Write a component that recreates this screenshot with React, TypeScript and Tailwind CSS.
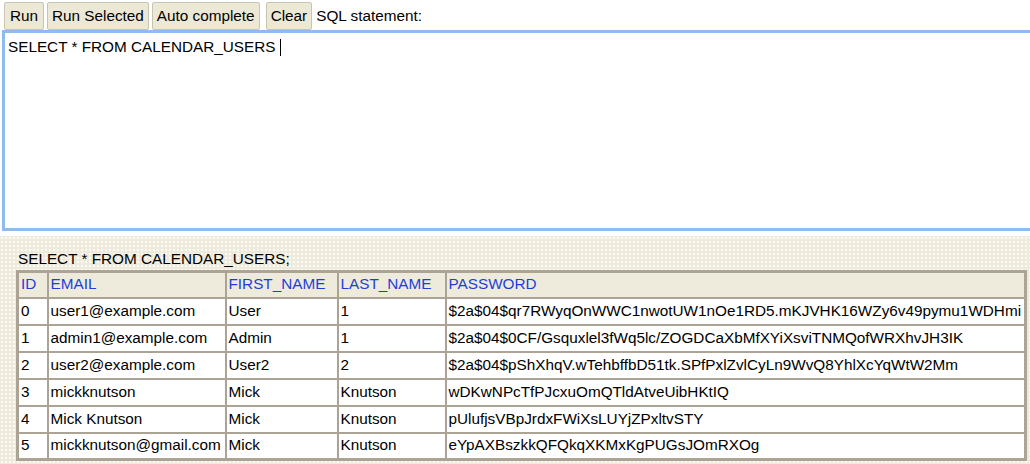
const rows = [
  ["0", "user1@example.com", "User", "1", "$2a$04$qr7RWyqOnWWC1nwotUW1nOe1RD5.mKJVHK16WZy6v49pymu1WDHmi"],
  ["1", "admin1@example.com", "Admin", "1", "$2a$04$0CF/Gsquxlel3fWq5lc/ZOGDCaXbMfXYiXsviTNMQofWRXhvJH3IK"],
  ["2", "user2@example.com", "User2", "2", "$2a$04$pShXhqV.wTehbffbD51tk.SPfPxlZvlCyLn9WvQ8YhlXcYqWtW2Mm"],
  ["3", "mickknutson", "Mick", "Knutson", "wDKwNPcTfPJcxuOmQTldAtveUibHKtIQ"],
  ["4", "Mick Knutson", "Mick", "Knutson", "pUlufjsVBpJrdxFWiXsLUYjZPxltvSTY"],
  ["5", "mickknutson@gmail.com", "Mick", "Knutson", "eYpAXBszkkQFQkqXKMxKgPUGsJOmRXOg"],
];

const headers = ["ID", "EMAIL", "FIRST_NAME", "LAST_NAME", "PASSWORD"];
const widths = ["w-[30px]", "w-[178px]", "w-[112px]", "w-[108px]", ""];

function ToolButton({ label, className = "" }: { label: string; className?: string }) {
  return (
    <button
      className={`h-[28px] rounded-[2px] border border-[#c9c4b2] bg-[#ece8d6] px-[4px] leading-none text-black ${className}`}
    >
      {label}
    </button>
  );
}

export default function App() {
  return (
    <div className="h-[464px] w-[1030px] overflow-hidden bg-white font-['Liberation_Sans',Arial,sans-serif] text-[15.3px] text-black">
      {/* Toolbar */}
      <div className="flex h-[30px] items-center gap-[3px] pl-[4px] pt-[2px]">
        <ToolButton label="Run" className="w-[40px]" />
        <ToolButton label="Run Selected" />
        <ToolButton label="Auto complete" />
        <ToolButton label="Clear" className="ml-[3px]" />
        <span className="ml-px">SQL statement:</span>
      </div>

      {/* Editor */}
      <div className="-mr-[6px] ml-[2px] h-[201px] border-[3px] border-[#8fbcf0] bg-white px-[3px] pt-[3px]">
        <div className="flex items-center">
          <span>SELECT * FROM CALENDAR_USERS</span>
          <span className="ml-[5px] inline-block h-[17px] w-px bg-black" />
        </div>
      </div>

      {/* Results */}
      <div className="mt-[5px] h-[300px] bg-[#efebdc] bg-[radial-gradient(#fbfaf4_0.8px,transparent_0.9px)] bg-[length:4px_4px] pl-[16px] pr-[3px] pt-[12px]">
        <div className="pl-[2px] leading-[22px]">SELECT * FROM CALENDAR_USERS;</div>
        <table className="w-[1011px] border-collapse border-[3px] border-[#aba494]">
          <thead>
            <tr className="h-[26px] bg-[#efebdc]">
              {headers.map((h, i) => (
                <th
                  key={h}
                  className={`${widths[i]} border-[2px] border-[#aba494] px-[2px] text-left font-normal text-[#1d3fd8]`}
                >
                  {h}
                </th>
              ))}
            </tr>
          </thead>
          <tbody>
            {rows.map((r) => (
              <tr key={r[0]} className="h-[27px] bg-white">
                {r.map((c, i) => (
                  <td key={i} className="border-[2px] border-[#aba494] px-[2px] whitespace-nowrap">
                    {c}
                  </td>
                ))}
              </tr>
            ))}
          </tbody>
        </table>
        <div className="pl-[2px] leading-[20px]">(6 rows, 3 ms)</div>
      </div>
    </div>
  );
}
